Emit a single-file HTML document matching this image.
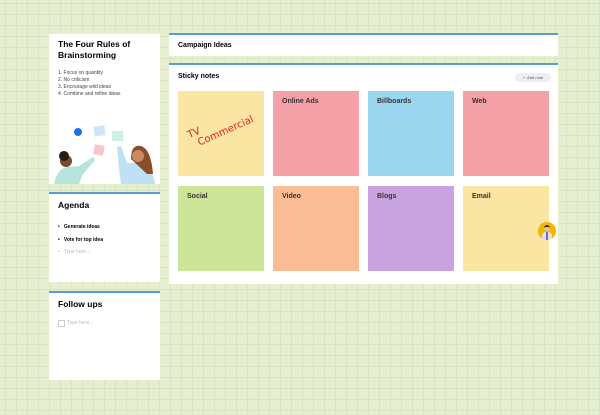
<!DOCTYPE html>
<html><head><style>
body{margin:0;width:600px;height:415px;overflow:hidden;font-family:"Liberation Sans",sans-serif;
background-color:#e6f0d0;
background-image:linear-gradient(#d8e6c0 1px,transparent 1px),linear-gradient(90deg,#d8e6c0 1px,transparent 1px);
background-size:11px 11px;background-position:5px 3px;position:relative}
.card{position:absolute;background:#fff}
.bt{border-top:2px solid #5b9bd5}
.n{position:absolute;width:86px;height:85px;font-size:7px;font-weight:bold;color:#333;box-sizing:border-box;padding:7px 9px;overflow:hidden}
</style></head><body>
<div class="card" style="left:49px;top:34px;width:111px;height:150px">
 <div style="position:absolute;left:9px;top:5px;font-size:8.5px;font-weight:bold;line-height:11px">The Four Rules of<br>Brainstorming</div>
 <div style="position:absolute;left:9px;top:36px;font-size:5px;line-height:7px;color:#444">1. Focus on quantity<br>2. No criticism<br>3. Encourage wild ideas<br>4. Combine and refine ideas</div>
 <svg style="position:absolute;left:0;top:85px" width="111" height="65" viewBox="0 0 111 65">
  <rect x="45" y="7" width="11" height="10" fill="#cfe6f7" transform="rotate(-8 50 12)"/>
  <rect x="63" y="12" width="11" height="10" fill="#cfeee4"/>
  <rect x="45" y="26" width="10" height="10" fill="#f6c6c9" transform="rotate(10 50 31)"/>
  <circle cx="29" cy="13" r="4" fill="#1a73e8"/>
  <path d="M5 65 Q8 50 18 48 L30 47 L44 38 L46 41 L34 55 L30 65Z" fill="#b5e5dc"/>
  <circle cx="17" cy="42" r="6" fill="#7a4b2a"/><circle cx="15" cy="37" r="5" fill="#2b1d16"/>
  <path d="M72 65 L70 50 L68 28 L72 27 L78 44 L90 44 Q104 48 106 65Z" fill="#bfe0f5"/>
  <path d="M82 40 Q82 25 92 27 Q102 30 104 55 L98 55 Z" fill="#8b4e2a"/>
  <circle cx="89" cy="37" r="6" fill="#c98a5e"/>
 </svg>
</div>
<div class="card bt" style="left:49px;top:192px;width:111px;height:88px">
 <div style="position:absolute;left:9px;top:6px;font-size:8.5px;font-weight:bold">Agenda</div>
 <div style="position:absolute;left:9px;top:27px;font-size:5px;font-weight:bold;line-height:12.5px">•&nbsp;&nbsp; Generate ideas<br>•&nbsp;&nbsp; Vote for top idea<br><span style="color:#bbb;font-weight:normal">•&nbsp;&nbsp; Type here...</span></div>
</div>
<div class="card bt" style="left:49px;top:291px;width:111px;height:87px">
 <div style="position:absolute;left:9px;top:6px;font-size:8.5px;font-weight:bold">Follow ups</div>
 <div style="position:absolute;left:9px;top:27px;width:5px;height:5px;border:1px solid #ccc"></div>
 <div style="position:absolute;left:18px;top:27px;font-size:5px;color:#bbb">Type here...</div>
</div>
<div class="card bt" style="left:169px;top:33px;width:389px;height:21px">
 <div style="position:absolute;left:9px;top:7px;font-size:7px;font-weight:bold">Campaign Ideas</div>
</div>
<div class="card bt" style="left:169px;top:63px;width:389px;height:219px">
 <div style="position:absolute;left:9px;top:8px;font-size:7px;font-weight:bold">Sticky notes</div>
 <div style="position:absolute;right:7px;top:8px;width:36px;height:9px;border-radius:5px;background:#eee;font-size:4px;color:#555;line-height:9px;text-align:center">+&nbsp; Add note</div>
</div>
<div class="n" style="left:178px;top:91px;background:#fbe5a2">
 <div style="position:absolute;left:8px;top:40px;color:#e0202a;font-family:'DejaVu Sans',sans-serif;font-weight:normal;font-size:10px;line-height:11px;transform:rotate(-24deg);transform-origin:left top;white-space:nowrap">TV<br>&nbsp;&nbsp;Commercial</div></div>
<div class="n" style="left:273px;top:91px;background:#f4a0a6">Online Ads</div>
<div class="n" style="left:368px;top:91px;background:#9bd6ef">Billboards</div>
<div class="n" style="left:463px;top:91px;background:#f4a0a6">Web</div>
<div class="n" style="left:178px;top:186px;background:#cde598">Social</div>
<div class="n" style="left:273px;top:186px;background:#fbbd95">Video</div>
<div class="n" style="left:368px;top:186px;background:#c8a3df">Blogs</div>
<div class="n" style="left:463px;top:186px;background:#fbe5a2">Email</div>
<div style="position:absolute;left:538px;top:222px;width:18px;height:18px;border-radius:50%;background:#f7b500;overflow:hidden">
 <div style="position:absolute;left:6px;top:3px;width:6px;height:6px;border-radius:50%;background:#e8c09a;border-top:2px solid #333;box-sizing:border-box"></div>
 <div style="position:absolute;left:4px;top:10px;width:10px;height:9px;border-radius:4px 4px 0 0;background:#dde3f0"></div>
 <div style="position:absolute;left:8px;top:10px;width:2px;height:8px;background:#7a6bb0"></div>
</div>
</body></html>
